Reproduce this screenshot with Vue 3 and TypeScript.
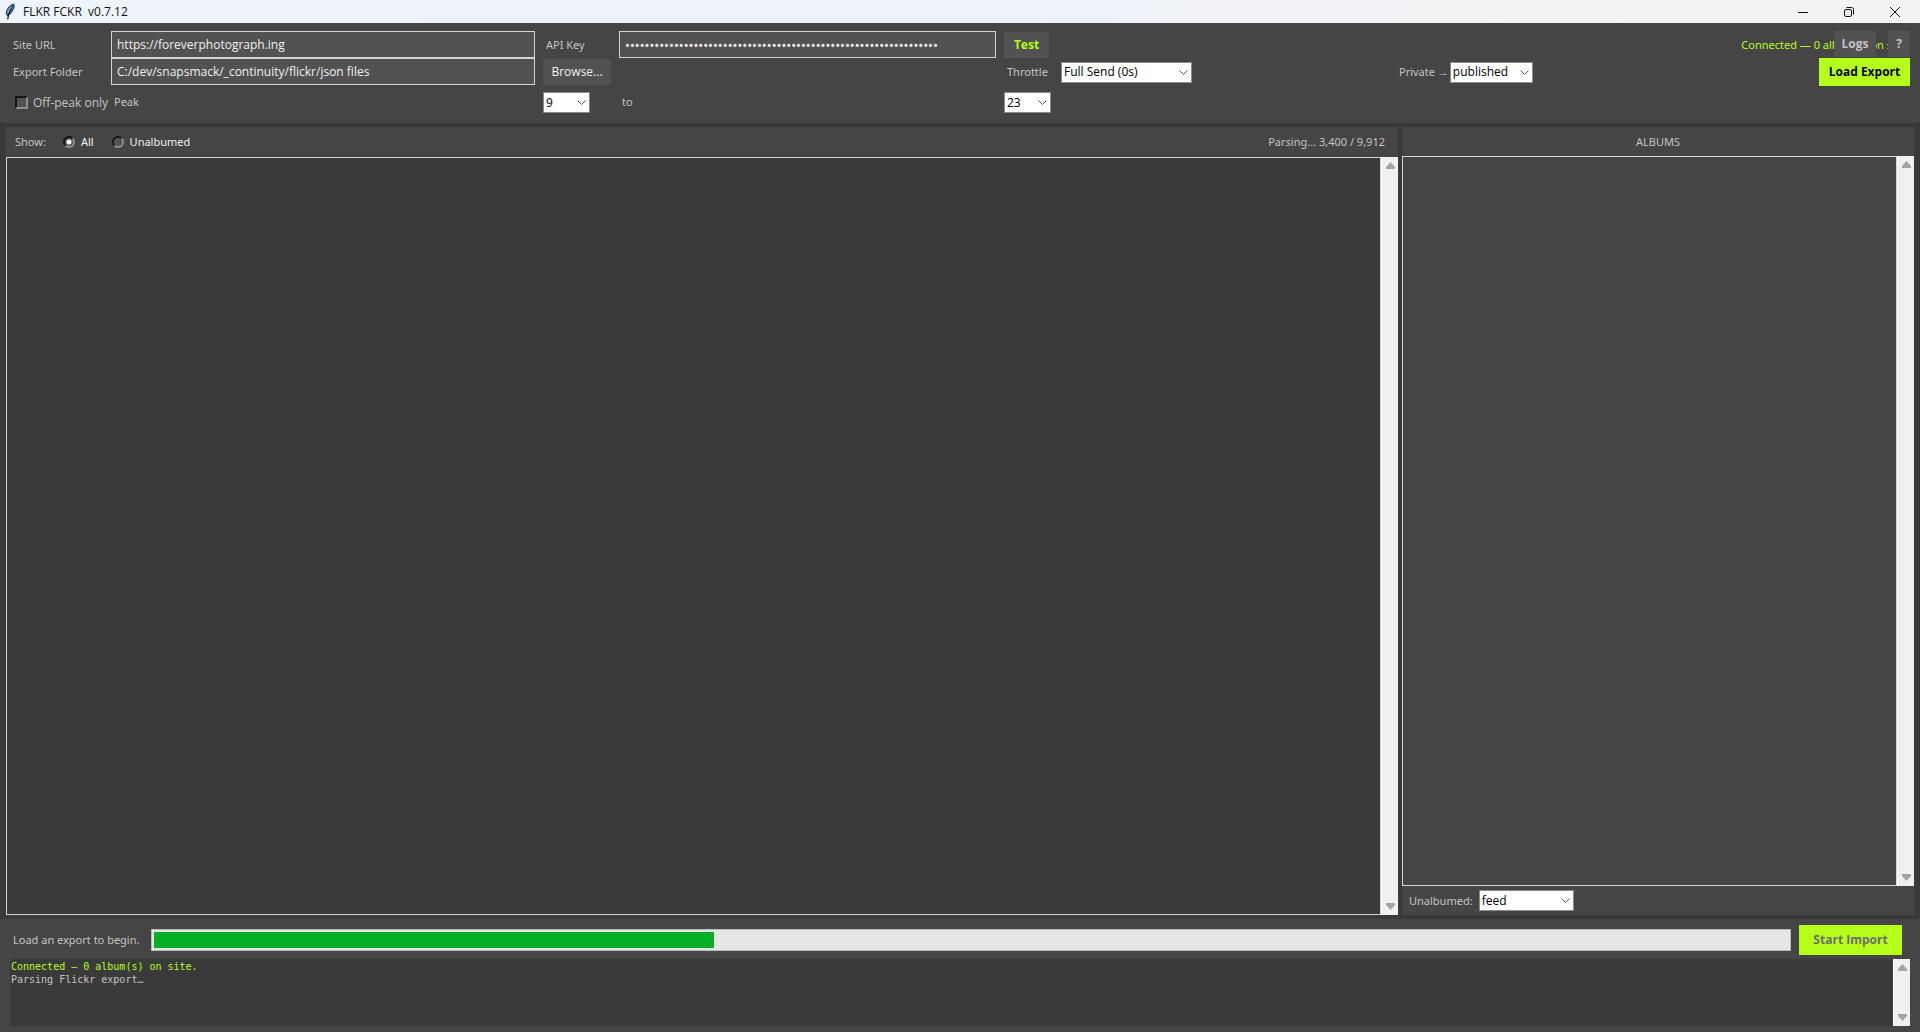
<script setup lang="ts">
import { ref } from 'vue'

const siteUrl = ref('https://foreverphotograph.ing')
const apiKey = ref('k'.repeat(64))
const exportFolder = ref('C:/dev/snapsmack/_continuity/flickr/json files')
const throttle = ref('Full Send (0s)')
const privacy = ref('published')
const offPeak = ref(false)
const peakFrom = ref('9')
const peakTo = ref('23')
const show = ref('all')
const unalbumed = ref('feed')
const parsed = 3400
const total = 9912
</script>

<template>
  <div class="window">
    <header class="titlebar">
      <svg class="feather" width="11" height="17" viewBox="0 0 11 17">
        <path d="M8.500 1C5 2 2 5.500 1.500 9c-.2 1.500 0 2.500.6 3.500C5 12 7.500 9 8 6.500 9.500 5 9.500 2 8.500 1z" fill="#4a86d0" stroke="#1a2a3f" stroke-width=".9" />
        <path d="M8 2.500C6 5.500 3.500 9 2.700 16.500" fill="none" stroke="#111" stroke-width="1.200" />
        <path d="M7 3.500C5 5.500 3.500 7.500 2.800 10" fill="none" stroke="#a9cdf0" stroke-width=".9" />
      </svg>
      <h1 class="title">FLKR FCKR&nbsp; v0.7.12</h1>
      <div class="caption-buttons">
        <button class="caption" aria-label="Minimize">
          <svg width="12" height="12" viewBox="0 0 12 12"><path d="M1 6.500h10" stroke="#111" fill="none" /></svg>
        </button>
        <button class="caption" aria-label="Restore">
          <svg width="12" height="12" viewBox="0 0 12 12" fill="none" stroke="#111"><rect x="1.500" y="3.500" width="7" height="7" rx="1.500" /><path d="M3.500 1.500h5a2 2 0 0 1 2 2v5" /></svg>
        </button>
        <button class="caption" aria-label="Close">
          <svg width="12" height="12" viewBox="0 0 12 12"><path d="M1 1l10 10M11 1L1 11" stroke="#111" fill="none" /></svg>
        </button>
      </div>
    </header>

    <section class="settings">
      <label class="lbl" for="site">Site URL</label>
      <input id="site" v-model="siteUrl" class="entry" type="text" />
      <label class="lbl" for="key">API Key</label>
      <input id="key" v-model="apiKey" class="entry key" type="password" />
      <button class="btn test">Test</button>
      <div class="rest">
        <span class="status">Connected — 0 album(s) on site.</span>
        <div class="overlay">
          <button class="btn dim">Logs</button>
          <button class="btn dim help">?</button>
        </div>
      </div>

      <label class="lbl" for="folder">Export Folder</label>
      <input id="folder" v-model="exportFolder" class="entry" type="text" />
      <button class="btn browse">Browse...</button>
      <span></span>
      <label class="lbl" for="throttle">Throttle</label>
      <div class="rest">
        <div class="combo w-throttle">
          <select id="throttle" v-model="throttle"><option>Full Send (0s)</option></select>
          <svg class="chev" viewBox="0 0 9 6"><path d="M.5 .5l4 4 4-4" /></svg>
        </div>
        <div class="private">
          <label for="private">Private →</label>
          <div class="combo w-private">
            <select id="private" v-model="privacy"><option>published</option></select>
            <svg class="chev" viewBox="0 0 9 6"><path d="M.5 .5l4 4 4-4" /></svg>
          </div>
        </div>
        <button class="btn lime load">Load Export</button>
      </div>

      <label class="check"><input v-model="offPeak" type="checkbox" />Off-peak only</label>
      <label class="lbl peak" for="from">Peak</label>
      <div class="combo w-hour">
        <select id="from" v-model="peakFrom"><option>9</option></select>
        <svg class="chev" viewBox="0 0 9 6"><path d="M.5 .5l4 4 4-4" /></svg>
      </div>
      <label class="lbl peak" for="to">to</label>
      <div class="combo w-hour">
        <select id="to" v-model="peakTo"><option>23</option></select>
        <svg class="chev" viewBox="0 0 9 6"><path d="M.5 .5l4 4 4-4" /></svg>
      </div>
    </section>

    <main class="main">
      <section class="photos">
        <div class="toolbar">
          <span class="show">Show:</span>
          <label class="radio"><input v-model="show" type="radio" name="show" value="all" />All</label>
          <label class="radio"><input v-model="show" type="radio" name="show" value="unalbumed" />Unalbumed</label>
          <span class="count">Parsing... 3,400 / 9,912</span>
        </div>
        <div class="pane">
          <div class="canvas dark"></div>
          <div class="scroll">
            <svg viewBox="0 0 9 7"><path d="M4.500 0L9 5v2H0V5z" /></svg>
            <svg viewBox="0 0 9 7"><path d="M4.500 7L9 2V0H0v2z" /></svg>
          </div>
        </div>
      </section>

      <aside class="albums">
        <h2 class="heading">ALBUMS</h2>
        <div class="pane">
          <div class="canvas"></div>
          <div class="scroll">
            <svg viewBox="0 0 9 7"><path d="M4.500 0L9 5v2H0V5z" /></svg>
            <svg viewBox="0 0 9 7"><path d="M4.500 7L9 2V0H0v2z" /></svg>
          </div>
        </div>
        <div class="albums-foot">
          <label for="unalbumed">Unalbumed:</label>
          <div class="combo w-feed">
            <select id="unalbumed" v-model="unalbumed"><option>feed</option></select>
            <svg class="chev" viewBox="0 0 9 6"><path d="M.5 .5l4 4 4-4" /></svg>
          </div>
        </div>
      </aside>
    </main>

    <footer class="bottom">
      <div class="run">
        <label class="run-label" for="progress">Load an export to begin.</label>
        <progress id="progress" :value="parsed" :max="total"></progress>
        <button class="btn lime start" disabled>Start Import</button>
      </div>
      <div class="pane log">
        <div class="log-text">
          <p class="ok">Connected — 0 album(s) on site.</p>
          <p>Parsing Flickr export…</p>
        </div>
        <div class="scroll">
          <svg viewBox="0 0 9 7"><path d="M4.500 0L9 5v2H0V5z" /></svg>
          <svg viewBox="0 0 9 7"><path d="M4.500 7L9 2V0H0v2z" /></svg>
        </div>
      </div>
    </footer>
  </div>
</template>

<style>
body {
  margin: 0;
  background: #3a3a3a;
}
</style>

<style scoped>
* {
  box-sizing: border-box;
}
.window {
  display: flex;
  flex-direction: column;
  min-height: 100vh;
  background: #3a3a3a;
  color: #c4c4c4;
  font: 11px/16px "Noto Sans", "Open Sans", sans-serif;
}
button,
input,
select {
  margin: 0;
  border: 0;
  border-radius: 0;
  padding: 0;
  font: inherit;
  color: inherit;
}
.title,
.entry,
.btn,
.check,
.combo select {
  font-family: "Open Sans", "Noto Sans", sans-serif;
  font-size: 12px;
}
.titlebar {
  display: flex;
  align-items: center;
  height: 23px;
  padding-left: 5px;
  background: linear-gradient(90deg, #eef4f9, #eef2fa 50%, #f3f3f3 85%);
  color: #111;
}
.title {
  margin: 0 0 0 7px;
  font-weight: 400;
}
.caption-buttons {
  display: flex;
  margin-left: auto;
  padding-right: 2px;
}
.caption {
  display: flex;
  align-items: center;
  justify-content: center;
  width: 46px;
  height: 20px;
  background: none;
}
.settings {
  display: grid;
  grid-template-columns: 93px 424fr 68px 377fr 49px 849fr;
  grid-template-rows: 27px 27px 35px;
  column-gap: 8px;
  align-items: center;
  height: 100px;
  padding: 8px 10px 0;
  background: #454545;
}
.lbl {
  padding-left: 3px;
}
.peak {
  padding-bottom: 2px;
}
.entry {
  width: 100%;
  height: 27px;
  padding: 0 5px;
  border: 1px solid #d4d4d4;
  background: #525252;
  color: #f0f0f0;
}
.key {
  font-family: "Noto Sans", sans-serif;
  font-size: 13px;
}
.btn {
  height: 26px;
  background: #525252;
  color: #f0f0f0;
  font-weight: 700;
}
.test {
  width: 45px;
  color: #b5ff1a;
}
.browse {
  font-weight: 400;
}
.dim {
  width: 42px;
  color: #c4c4c4;
}
.help {
  width: 22px;
}
.lime {
  background: #b5ff1a;
  color: #000;
}
.rest {
  position: relative;
  display: grid;
  grid-template-columns: 338fr 420fr 91px;
  align-items: center;
  height: 27px;
}
.status {
  grid-column: 2 / 4;
  justify-self: end;
  padding-right: 2px;
  color: #b5ff1a;
  white-space: nowrap;
}
.overlay {
  position: absolute;
  top: 0;
  right: 0;
  display: flex;
  gap: 12px;
}
.private {
  display: flex;
  align-items: center;
  gap: 1px;
}
.load {
  height: 28px;
}
.combo {
  position: relative;
  height: 21px;
}
.combo select {
  display: block;
  appearance: none;
  width: 100%;
  height: 21px;
  padding: 0 2px;
  border: 1px solid #8a8a8a;
  background: #fff;
  color: #000;
}
.chev {
  position: absolute;
  top: 8px;
  right: 4px;
  width: 9px;
  height: 6px;
  fill: none;
  stroke: #555;
  pointer-events: none;
}
.w-throttle {
  width: 131px;
}
.w-private {
  width: 83px;
}
.w-hour {
  width: 47px;
}
.w-feed {
  width: 95px;
}
.check {
  display: flex;
  align-items: center;
  gap: 5px;
  padding-left: 5px;
  white-space: nowrap;
}
.check input {
  appearance: none;
  flex: none;
  width: 13px;
  height: 13px;
  border: 2px solid;
  border-color: #151515 #8e8e8e #8e8e8e #151515;
  background: #525252;
}
.main {
  flex: 1;
  display: grid;
  grid-template-columns: 1392fr 512fr;
  gap: 4px;
  padding: 4px 6px;
}
.photos,
.albums {
  display: flex;
  flex-direction: column;
  background: #454545;
}
.toolbar {
  display: flex;
  align-items: center;
  height: 30px;
  padding: 0 13px 0 9px;
}
.show {
  margin-right: 17px;
}
.radio {
  display: flex;
  align-items: center;
  gap: 6px;
  margin-right: 18px;
  color: #f0f0f0;
}
.radio input {
  appearance: none;
  width: 12px;
  height: 12px;
  border: 2px solid;
  border-color: #151515 #8e8e8e #8e8e8e #151515;
  border-radius: 50%;
  background: #525252;
}
.radio input:checked {
  background: radial-gradient(circle, #fff 2px, #525252 3px);
}
.count {
  margin-left: auto;
}
.pane {
  flex: 1;
  display: flex;
}
.canvas {
  flex: 1;
  border: 1px solid #d4d4d4;
  background: #454545;
}
.dark {
  background: #3a3a3a;
}
.scroll {
  display: flex;
  flex-direction: column;
  justify-content: space-between;
  align-items: center;
  width: 17px;
  padding: 5px 0;
  border-left: 1px solid #fff;
  background: #f0f0f0;
}
.scroll svg {
  width: 9px;
  height: 7px;
  fill: #a3a3a3;
}
.heading {
  margin: 0;
  font-size: 11px;
  font-weight: 400;
  line-height: 29px;
  text-align: center;
}
.albums-foot {
  display: flex;
  align-items: center;
  gap: 6px;
  height: 29px;
  padding-left: 7px;
}
.bottom {
  padding: 6px 10px;
  background: #454545;
}
.run {
  display: flex;
  align-items: center;
  gap: 8px;
  padding-right: 8px;
}
.run-label {
  width: 133px;
  padding-left: 3px;
  white-space: nowrap;
}
progress {
  appearance: none;
  flex: 1;
  height: 22px;
  padding: 2px;
  border: 1px solid #bcbcbc;
  background: #e6e6e6;
}
progress::-webkit-progress-bar {
  background: #e6e6e6;
}
progress::-webkit-progress-value {
  background: #06b025;
}
.start {
  width: 103px;
  height: 30px;
  color: #6d6d6d;
}
.log {
  height: 67px;
  margin-top: 4px;
  background: #3a3a3a;
}
.log-text {
  flex: 1;
  padding: 1px;
  font: 10px/13px "DejaVu Sans Mono", monospace;
}
.log-text p {
  margin: 0;
}
.log-text .ok {
  color: #b5ff1a;
}
</style>
